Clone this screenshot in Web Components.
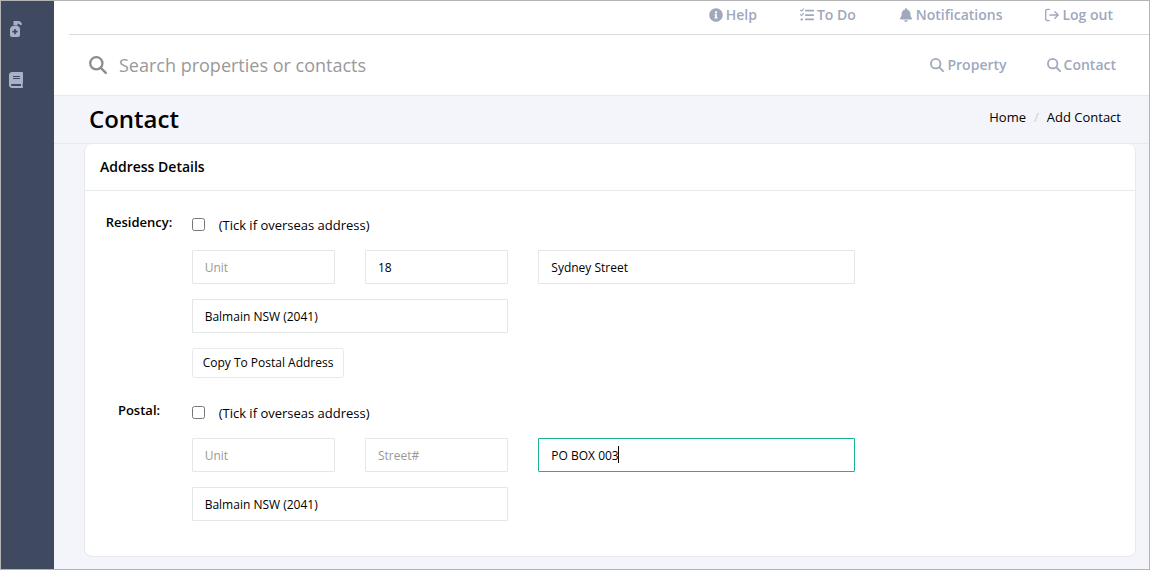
<!DOCTYPE html>
<html lang="en">
<head>
<meta charset="utf-8">
<meta name="viewport" content="width=device-width, initial-scale=1">
<title>Add Contact</title>
<style>
  * {
    box-sizing: border-box;
  }
  body {
    margin: 0;
    font-family: "Open Sans", "Noto Sans", sans-serif;
    font-size: 13px;
    line-height: 20px;
    color: #000;
    --muted: #a0a8bd;
    --line: #e7eaec;
    --page: #f4f5fa;
    --sidebar: #3f4960;
    --accent: #1ab394;
  }
</style>
</head>
<body>
<app-shell>
  <app-sidebar slot="sidebar"></app-sidebar>
  <top-bar></top-bar>
  <search-bar></search-bar>
  <page-heading heading="Contact" current="Add Contact"></page-heading>
  <content-panel heading="Address Details">
    <address-block label="Residency:">
      <form-field label="Unit" placeholder="Unit"></form-field>
      <form-field label="Street number" placeholder="Street#" value="18"></form-field>
      <form-field label="Street" size="wide" value="Sydney Street"></form-field>
      <form-field label="Suburb" size="wide" value="Balmain NSW (2041)"></form-field>
      <copy-button slot="actions">Copy To Postal Address</copy-button>
    </address-block>
    <address-block label="Postal:">
      <form-field label="Unit" placeholder="Unit"></form-field>
      <form-field label="Street number" placeholder="Street#"></form-field>
      <form-field label="Street" size="wide" value="PO BOX 003" active></form-field>
      <form-field label="Suburb" size="wide" value="Balmain NSW (2041)"></form-field>
    </address-block>
  </content-panel>
</app-shell>

<script>
const ICONS = {
  info: ['0 0 512 512', '<path d="M256 8C119.043 8 8 119.083 8 256c0 136.997 111.043 248 248 248s248-111.003 248-248C504 119.083 392.957 8 256 8zm0 110c23.196 0 42 18.804 42 42s-18.804 42-42 42-42-18.804-42-42 18.804-42 42-42zm56 254c0 6.627-5.373 12-12 12h-88c-6.627 0-12-5.373-12-12v-24c0-6.627 5.373-12 12-12h12v-64h-12c-6.627 0-12-5.373-12-12v-24c0-6.627 5.373-12 12-12h64c6.627 0 12 5.373 12 12v100h12c6.627 0 12 5.373 12 12v24z"/>'],
  tasks: ['0 0 512 512', '<g fill="none" stroke="currentColor" stroke-width="40" stroke-linecap="round" stroke-linejoin="round"><path d="M20 82l36 34 74-80M20 242l36 34 74-80"/></g><circle cx="64" cy="416" r="44"/><path d="M200 64h296q16 0 16 16v32q0 16-16 16H200q-16 0-16-16V80q0-16 16-16zM200 224h296q16 0 16 16v32q0 16-16 16H200q-16 0-16-16v-32q0-16 16-16zM200 384h296q16 0 16 16v32q0 16-16 16H200q-16 0-16-16v-32q0-16 16-16z"/>'],
  bell: ['0 0 448 512', '<path d="M224 512c35.32 0 63.97-28.65 63.97-64H160.03c0 35.35 28.65 64 63.97 64zm215.39-149.71c-19.32-20.76-55.47-51.99-55.47-154.29 0-77.7-54.48-139.9-127.94-155.16V32c0-17.67-14.32-32-31.98-32s-31.98 14.33-31.98 32v20.84C118.56 68.1 64.08 130.3 64.08 208c0 102.3-36.15 133.53-55.47 154.29-6 6.45-8.66 14.16-8.61 21.71.11 16.4 12.98 32 32.1 32h383.8c19.12 0 32-15.6 32.1-32 .05-7.55-2.61-15.27-8.61-21.71z"/>'],
  logout: ['0 0 512 512', '<g fill="none" stroke="currentColor" stroke-width="50" stroke-linecap="round" stroke-linejoin="round"><path d="M160 52H88q-64 0-64 64v280q0 64 64 64h72"/><path d="M180 256h300M360 136l122 120-122 120"/></g>'],
  search: ['0 0 512 512', '<g fill="none" stroke="currentColor" stroke-width="66" stroke-linecap="round"><circle cx="208" cy="208" r="174"/><path d="M336 336l142 142"/></g>'],
  pump: ['0 0 14 16', '<path fill-rule="evenodd" d="M4.500 0h4.500q3.500.2 4 3.500l-1.500.8-1.500-1.500H8.500V4.500H4.500zM3.500 5h5.500q2 1 2 3v6q0 2-2 2H3q-2 0-2-2V8q0-2 2.500-3zM5.200 8v1.800H3.400v1.600h1.800v1.800h1.600v-1.800h1.800V9.800H6.800V8z"/>'],
  book: ['0 0 448 512', '<path d="M448 360V24c0-13.3-10.7-24-24-24H96C43 0 0 43 0 96v320c0 53 43 96 96 96h328c13.3 0 24-10.700 24-24v-16c0-7.500-3.500-14.300-8.900-18.700-4.200-15.400-4.200-59.300 0-74.700 5.400-4.300 8.900-11.100 8.900-18.600zM128 134c0-3.300 2.700-6 6-6h212c3.300 0 6 2.700 6 6v20c0 3.300-2.700 6-6 6H134c-3.300 0-6-2.700-6-6v-20zm0 64c0-3.300 2.700-6 6-6h212c3.300 0 6 2.700 6 6v20c0 3.300-2.700 6-6 6H134c-3.300 0-6-2.700-6-6v-20zm253.400 250H96c-17.700 0-32-14.300-32-32 0-17.600 14.400-32 32-32h285.400c-1.900 17.100-1.900 46.900 0 64z"/>']
};

class AppIcon extends HTMLElement {
  constructor() {
    super();
    this.attachShadow({ mode: 'open' });
  }

  connectedCallback() {
    const [viewBox, shapes] = ICONS[this.getAttribute('name')];
    this.shadowRoot.innerHTML = `
      <style>
        :host {
          display: inline-flex;
          flex: none;
          width: 14px;
          height: 14px;
        }
        svg {
          width: 100%;
          height: 100%;
          fill: currentColor;
        }
      </style>
      <svg viewBox="${viewBox}" aria-hidden="true">${shapes}</svg>
    `;
  }
}
customElements.define('app-icon', AppIcon);

class AppShell extends HTMLElement {
  constructor() {
    super();
    this.attachShadow({ mode: 'open' });
    this.shadowRoot.innerHTML = `
      <style>
        :host {
          box-sizing: border-box;
          display: flex;
          min-height: 100vh;
          border: 1px solid #b4b4b4;
          background: var(--page);
        }
        main {
          flex: 1;
          min-width: 0;
        }
      </style>
      <slot name="sidebar"></slot>
      <main><slot></slot></main>
    `;
  }
}
customElements.define('app-shell', AppShell);

class AppSidebar extends HTMLElement {
  constructor() {
    super();
    this.attachShadow({ mode: 'open' });
    this.shadowRoot.innerHTML = `
      <style>
        :host {
          flex: none;
          width: 53px;
          background: var(--sidebar);
        }
        nav {
          display: flex;
          flex-direction: column;
          align-items: flex-start;
          gap: 35px;
          padding: 20px 7px;
        }
        a {
          display: flex;
          color: #a7b1c8;
        }
        app-icon {
          width: 16px;
          height: 16px;
        }
      </style>
      <nav>
        <a href="#maintenance" aria-label="Maintenance"><app-icon name="pump"></app-icon></a>
        <a href="#ledger" aria-label="Ledger"><app-icon name="book"></app-icon></a>
      </nav>
    `;
  }
}
customElements.define('app-sidebar', AppSidebar);

// Icon + text link used by the top bar and the search bar
class IconLink extends HTMLElement {
  constructor() {
    super();
    this.attachShadow({ mode: 'open' });
  }

  connectedCallback() {
    this.shadowRoot.innerHTML = `
      <style>
        :host {
          display: block;
        }
        a {
          display: flex;
          align-items: center;
          gap: 3px;
          color: var(--muted);
          font-size: 14px;
          font-weight: 600;
          text-decoration: none;
          white-space: nowrap;
        }
      </style>
      <a href="#${this.getAttribute('icon')}"><app-icon name="${this.getAttribute('icon')}"></app-icon><slot></slot></a>
    `;
  }
}
customElements.define('icon-link', IconLink);

class TopBar extends HTMLElement {
  constructor() {
    super();
    this.attachShadow({ mode: 'open' });
    this.shadowRoot.innerHTML = `
      <style>
        :host {
          display: block;
          padding-left: 15px;
          background: #fff;
        }
        nav {
          display: flex;
          justify-content: flex-end;
          gap: 43px;
          padding: 4px 36px 9px 0;
          border-bottom: 1px solid #d9dadd;
        }
      </style>
      <nav>
        <icon-link icon="info">Help</icon-link>
        <icon-link icon="tasks">To Do</icon-link>
        <icon-link icon="bell">Notifications</icon-link>
        <icon-link icon="logout">Log out</icon-link>
      </nav>
    `;
  }
}
customElements.define('top-bar', TopBar);

class SearchBar extends HTMLElement {
  constructor() {
    super();
    this.attachShadow({ mode: 'open' });
    this.shadowRoot.innerHTML = `
      <style>
        :host {
          display: flex;
          align-items: center;
          gap: 40px;
          padding: 17px 33px 18px 35px;
          border-bottom: 1px solid var(--line);
          background: #fff;
        }
        label {
          display: flex;
          flex: 1;
          align-items: center;
          gap: 12px;
          color: #8c8c8c;
        }
        label app-icon {
          width: 18px;
          height: 18px;
        }
        input {
          flex: 1;
          min-width: 0;
          height: 25px;
          padding: 0;
          border: 0;
          outline: 0;
          background: transparent;
          font: inherit;
          font-size: 18px;
        }
        input::placeholder {
          color: #999;
        }
      </style>
      <label>
        <app-icon name="search"></app-icon>
        <input type="text" placeholder="Search properties or contacts" aria-label="Search properties or contacts">
      </label>
      <icon-link icon="search">Property</icon-link>
      <icon-link icon="search">Contact</icon-link>
    `;
  }
}
customElements.define('search-bar', SearchBar);

class PageHeading extends HTMLElement {
  constructor() {
    super();
    this.attachShadow({ mode: 'open' });
  }

  connectedCallback() {
    this.shadowRoot.innerHTML = `
      <style>
        :host {
          display: flex;
          align-items: center;
          justify-content: space-between;
          padding: 7px 28px 8px 35px;
          border-bottom: 1px solid var(--line);
        }
        h1 {
          margin: 0;
          font-size: 24px;
          font-weight: 600;
          line-height: 32px;
        }
        ol {
          display: flex;
          margin: 0;
          padding: 0 0 4px;
          list-style: none;
        }
        li + li::before {
          content: "/";
          padding: 0 8px;
          color: #ccc;
        }
        a {
          color: inherit;
          text-decoration: none;
        }
      </style>
      <h1>${this.getAttribute('heading')}</h1>
      <ol>
        <li><a href="#home">Home</a></li>
        <li>${this.getAttribute('current')}</li>
      </ol>
    `;
  }
}
customElements.define('page-heading', PageHeading);

class ContentPanel extends HTMLElement {
  constructor() {
    super();
    this.attachShadow({ mode: 'open' });
  }

  connectedCallback() {
    this.shadowRoot.innerHTML = `
      <style>
        :host {
          display: block;
          margin: 0 13px 12px 30px;
          border: 1px solid var(--line);
          border-top: 0;
          border-radius: 8px;
          background: #fff;
        }
        h2 {
          margin: 0;
          padding: 13px 15px;
          border-bottom: 1px solid var(--line);
          font-size: 14px;
          font-weight: 600;
          line-height: 20px;
        }
        form {
          display: grid;
          gap: 22px;
          padding: 21px 20px 35px;
        }
      </style>
      <h2>${this.getAttribute('heading')}</h2>
      <form><slot></slot></form>
    `;
  }
}
customElements.define('content-panel', ContentPanel);

class AddressBlock extends HTMLElement {
  constructor() {
    super();
    this.attachShadow({ mode: 'open' });
  }

  connectedCallback() {
    this.shadowRoot.innerHTML = `
      <style>
        :host {
          display: grid;
          grid-template-columns: repeat(12, minmax(0, 1fr));
          column-gap: 30px;
          row-gap: 15px;
        }
        .name {
          grid-column: 1;
          width: 68px;
          font-weight: 600;
          text-align: center;
        }
        .overseas {
          grid-column: 2 / -1;
          display: flex;
          align-items: center;
          gap: 14px;
          justify-self: start;
          padding-top: 4px;
          line-height: 19px;
        }
        .overseas input {
          width: 13px;
          height: 13px;
          margin: 0 0 3px;
        }
        .actions {
          grid-column: 2 / -1;
        }
        ::slotted(form-field) {
          grid-column-end: span 2;
        }
        ::slotted([size="wide"]) {
          grid-column-end: span 4;
        }
        /* unit and suburb open a new line under the tick box */
        ::slotted(form-field:first-child),
        ::slotted(form-field:nth-child(4)) {
          grid-column-start: 2;
        }
      </style>
      <span class="name">${this.getAttribute('label')}</span>
      <label class="overseas"><input type="checkbox">(Tick if overseas address)</label>
      <slot></slot>
      ${this.querySelector('[slot="actions"]') ? '<div class="actions"><slot name="actions"></slot></div>' : ''}
    `;
  }
}
customElements.define('address-block', AddressBlock);

class FormField extends HTMLElement {
  constructor() {
    super();
    this.attachShadow({ mode: 'open' });
  }

  connectedCallback() {
    const label = this.getAttribute('label');
    const placeholder = this.getAttribute('placeholder') || '';
    const value = this.getAttribute('value') || '';
    this.shadowRoot.innerHTML = `
      <style>
        :host {
          position: relative;
          display: block;
        }
        input {
          box-sizing: border-box;
          display: block;
          width: 100%;
          height: 34px;
          padding: 6px 12px;
          border: 1px solid #e5e6e7;
          border-radius: 1px;
          outline: 0;
          background: #fff;
          color: inherit;
          font: inherit;
          font-size: 12px;
        }
        input::placeholder {
          color: #999;
        }
        input:focus,
        :host([active]) input {
          border-color: var(--accent);
        }
        .caret {
          position: absolute;
          top: 8px;
          left: 80px;
          width: 1px;
          height: 17px;
          background: #000;
        }
      </style>
      <input type="text" aria-label="${label}" placeholder="${placeholder}" value="${value}">
      ${this.hasAttribute('active') ? '<span class="caret"></span>' : ''}
    `;
  }
}
customElements.define('form-field', FormField);

class CopyButton extends HTMLElement {
  constructor() {
    super();
    this.attachShadow({ mode: 'open' });
    this.shadowRoot.innerHTML = `
      <style>
        :host {
          display: flex;
        }
        button {
          padding: 4px 10px;
          border: 1px solid var(--line);
          border-radius: 3px;
          background: #fff;
          color: inherit;
          font: inherit;
          font-size: 12px;
          line-height: 20px;
          white-space: nowrap;
          cursor: pointer;
        }
      </style>
      <button type="button"><slot></slot></button>
    `;
  }
}
customElements.define('copy-button', CopyButton);
</script>
</body>
</html>
